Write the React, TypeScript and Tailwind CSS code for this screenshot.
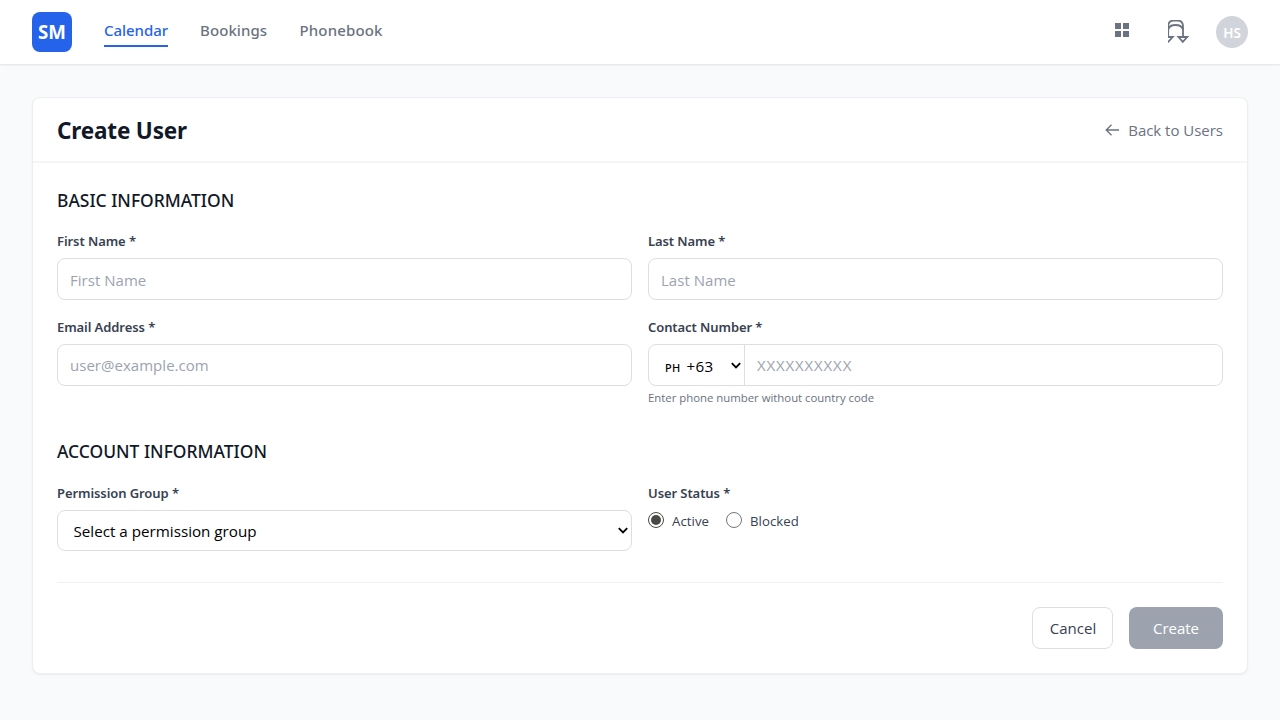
import type { ReactNode } from 'react';

function Label({ children }: { children: ReactNode }) {
  return <label className="block h-5 text-[13px] leading-5 font-semibold tracking-[-0.08px] text-[#374151]">{children}</label>;
}

function SectionTitle({ children }: { children: ReactNode }) {
  return <h2 className="h-7 text-[17.45px] leading-7 font-medium text-[#111827]">{children}</h2>;
}

function Chevron() {
  return (
    <svg className="h-[7px] w-[10px] shrink-0" viewBox="0 0 10 7" fill="none" stroke="#000" strokeWidth="1.8">
      <path d="M0.8 1.2 5 5.4 9.2 1.2" />
    </svg>
  );
}

function Radio({ checked = false, label }: { checked?: boolean; label: string }) {
  return (
    <label className="flex items-center gap-2">
      <svg className="size-4" viewBox="0 0 16 16">
        <circle cx="8" cy="8" r="7.5" fill="#fff" stroke={checked ? '#4a4a46' : '#767676'} />
        {checked && <circle cx="8" cy="8" r="5" fill="#4a4a46" />}
      </svg>
      <span className="pt-0.5 font-['Open_Sans',sans-serif] text-[13.2px] leading-5 tracking-[0.05px] text-[#374151]">{label}</span>
    </label>
  );
}

const field =
  "block h-[42px] w-full rounded-lg border border-[#dcdee3] bg-white px-3 font-['Open_Sans',sans-serif] text-[15px] tracking-[0.03px] text-[#111827] outline-none placeholder:text-[#9ca3af]";

export default function App() {
  return (
    <div className="min-h-screen bg-[#f9fafb] font-['Noto_Sans',sans-serif]">
      <header className="flex h-16 items-center justify-between bg-white px-8 shadow-[0_1px_2px_rgba(0,0,0,0.1)]">
        <div className="flex items-center gap-8">
          <div className="flex size-10 items-center justify-center rounded-lg bg-[#2563eb] pt-px text-[18.7px] font-bold text-white">
            SM
          </div>
          <nav className="flex gap-8 text-[15px] leading-6 font-medium text-[#6b7280]">
            <a className="w-16 border-b-2 border-[#2563eb] pt-px pb-[3px] tracking-[-0.05px] text-[#2563eb]">Calendar</a>
            <a className="w-[67.5px] pt-px pb-[3px] tracking-[0.08px]">Bookings</a>
            <a className="pt-px pb-[3px] tracking-[0.15px]">Phonebook</a>
          </nav>
        </div>
        <div className="flex items-center">
          <svg className="mr-[39px] mb-1 size-[14px]" viewBox="0 0 14 14" fill="#6b7280">
            <path d="M0 0h6v6H0zM8 0h6v6H8zM0 8h6v6H0zM8 8h6v6H8z" />
          </svg>
          <svg className="mr-6 size-6" viewBox="0 0 24 24" fill="none" stroke="#6b7280" strokeWidth="1.8">
            <path d="M15 17h4.2l-4.4 4.8-4.3-4.8H15V6.5C15 2.2 13 .6 9.5.6H5.5C2 .6 .2 2.2 .2 6.5V17h4.5L-.3 22.3" />
            <path d="M.2 9.5C1 6.2 3.5 5 7.5 5S14 6.2 15 9.5" />
          </svg>
          <div className="flex size-8 items-center justify-center rounded-full bg-[#d1d5db] pt-0.5 text-[13.5px] font-semibold text-white">
            HS
          </div>
        </div>
      </header>

      <main className="px-8 pt-[33px]">
        <section className="h-[577px] rounded-lg border border-[#eceef1] bg-white shadow-[0_1px_2px_rgba(0,0,0,0.06)]">
          <div className="flex h-[65px] items-center justify-between border-b-2 border-[#f4f5f6] px-6 pt-0.5">
            <h1 className="text-[22.5px] leading-8 font-bold tracking-[-0.17px] text-[#111827]">Create User</h1>
            <a className="flex items-center gap-2 text-[#6b7280]">
              <svg className="mb-0.5 h-4 w-4" viewBox="0 0 16 16" fill="none" stroke="#6b7280" strokeWidth="1.3">
                <path d="M15 8H2.2M7.5 2.7 2.2 8l5.3 5.3" />
              </svg>
              <span className="font-['Open_Sans',sans-serif] text-[15px] tracking-[-0.02px]">Back to Users</span>
            </a>
          </div>

          <form className="px-6 pt-[23px]">
            <SectionTitle>BASIC INFORMATION</SectionTitle>
            <div className="mt-[17px] grid grid-cols-2 gap-x-4 gap-y-[17px]">
              <div>
                <Label>First Name *</Label>
                <input className={`mt-[7px] pt-px ${field}`} placeholder="First Name" />
              </div>
              <div>
                <Label>Last Name *</Label>
                <input className={`mt-[7px] pt-px ${field}`} placeholder="Last Name" />
              </div>
              <div>
                <Label>Email Address *</Label>
                <input className={`mt-[7px] ${field}`} placeholder="user@example.com" />
              </div>
              <div>
                <Label>Contact Number *</Label>
                <div className="mt-[7px] flex h-[42px] rounded-lg border border-[#dcdee3]">
                  <div className="flex w-24 items-center justify-between border-r border-[#dcdee3] pr-[3px] pl-4 text-black">
                    <span className="flex items-baseline gap-[6px] pt-[3px]">
                      <span className="text-[11px] leading-5 font-medium tracking-[0.3px]">PH</span>
                      <span className="font-['Open_Sans',sans-serif] text-[15.2px] leading-5 tracking-[0.3px]">+63</span>
                    </span>
                    <Chevron />
                  </div>
                  <input
                    className="min-w-0 flex-1 rounded-r-lg bg-white px-3 font-['Open_Sans',sans-serif] text-[15px] outline-none placeholder:tracking-[0.85px] placeholder:text-[#9ca3af]"
                    placeholder="XXXXXXXXXX"
                  />
                </div>
                <p className="mt-1 font-['Open_Sans',sans-serif] text-[11.4px] leading-4 tracking-[-0.02px] text-[#6b7280]">
                  Enter phone number without country code
                </p>
              </div>
            </div>

            <div className="mt-[31px]">
              <SectionTitle>ACCOUNT INFORMATION</SectionTitle>
            </div>
            <div className="mt-[18px] grid grid-cols-2 gap-x-4">
              <div>
                <Label>Permission Group *</Label>
                <div className="mt-[7px] flex h-[41px] items-center justify-between rounded-lg border border-[#dcdee3] pr-[3px] pl-[15.5px] text-black">
                  <span className="pt-0.5 font-['Open_Sans',sans-serif] text-[15.2px]">Select a permission group</span>
                  <Chevron />
                </div>
              </div>
              <div>
                <Label>User Status *</Label>
                <div className="mt-1.5 flex gap-[17px]">
                  <Radio checked label="Active" />
                  <Radio label="Blocked" />
                </div>
              </div>
            </div>

            <div className="mt-[31px] flex justify-end gap-4 border-t border-[#f0f1f3] pt-6 font-['Open_Sans',sans-serif] text-[15px]">
              <button type="button" className="h-[42px] w-[81px] rounded-lg border border-[#dcdee3] bg-white pt-px pl-px text-[#374151]">
                Cancel
              </button>
              <button type="button" className="h-[42px] w-[94px] rounded-lg bg-[#9ca3af] pt-px text-white">
                Create
              </button>
            </div>
          </form>
        </section>
      </main>
    </div>
  );
}
